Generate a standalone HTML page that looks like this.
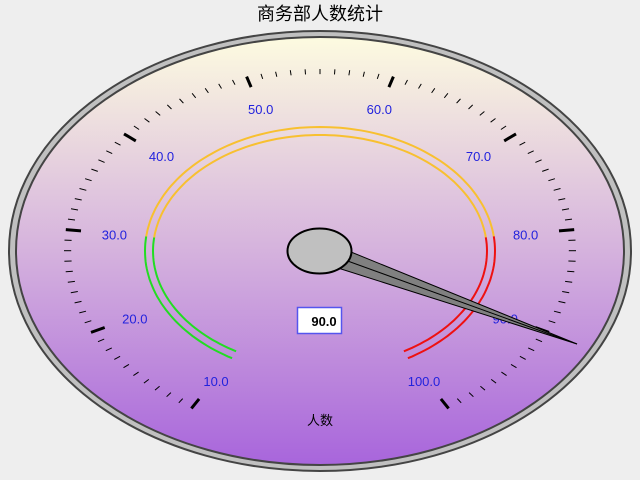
<!DOCTYPE html>
<html><head><meta charset="utf-8"><style>
html,body{margin:0;padding:0;background:#eeeeee;width:640px;height:480px;overflow:hidden}
svg{display:block}
</style></head><body>
<svg id="s" width="640" height="480" xmlns="http://www.w3.org/2000/svg" font-family="Liberation Sans, sans-serif">
<defs>
<linearGradient id="g" x1="0" y1="0" x2="0" y2="1">
<stop offset="0" stop-color="#fdfbe0"/>
<stop offset="0.5" stop-color="#d5b2dd"/>
<stop offset="1" stop-color="#a865dc"/>
</linearGradient>
</defs>
<text x="320" y="20" text-anchor="middle" font-size="18" font-family="Liberation Sans, Noto Sans CJK SC, sans-serif" fill="#000">商务部人数统计</text>
<ellipse cx="320" cy="251" rx="311" ry="220" fill="#c0c0c0" stroke="#444" stroke-width="2"/>
<ellipse cx="320" cy="251" rx="304" ry="214" fill="url(#g)" stroke="#444" stroke-width="2"/>
<g id="dyn"></g>
<text x="320" y="425" text-anchor="middle" font-size="13" font-family="Liberation Sans, Noto Sans CJK SC, sans-serif" fill="#000">人数</text>
<rect x="297.5" y="307.5" width="44" height="26" fill="#fff" stroke="#5555ee" stroke-width="1.5"/>
<text x="324" y="326" text-anchor="middle" font-size="13" font-weight="bold" fill="#000">90.0</text>
</svg>
<script>
var cx=320,cy=251,R=256,Q=182,g=document.getElementById("dyn"),h="";
function ang(v){return (90-(v-55)*3.33)*Math.PI/180;}
function pt(v,rx,ry){var a=ang(v);return [cx+rx*Math.cos(a),cy-ry*Math.sin(a)];}
function arc(v1,v2,rx,ry,col){var d="";for(var v=v1;v<=v2+1e-6;v+=0.5){var p=pt(v,rx,ry);d+=(d?"L":"M")+p[0].toFixed(1)+" "+p[1].toFixed(1);}h+='<path d="'+d+'" fill="none" stroke="'+col+'" stroke-width="2"/>';}
arc(10,30,175,124,"#22dd22");arc(10,30,167,116,"#22dd22");
arc(30,80,175,124,"#f8c030");arc(30,80,167,116,"#f8c030");
arc(80,100,175,124,"#ee1111");arc(80,100,167,116,"#ee1111");
for(var v=10;v<=100;v++){var maj=v%10==0;var f=maj?0.94:0.972;var a=pt(v,R,Q),b=pt(v,R*f,Q*f);
h+='<line x1="'+a[0].toFixed(1)+'" y1="'+a[1].toFixed(1)+'" x2="'+b[0].toFixed(1)+'" y2="'+b[1].toFixed(1)+'" stroke="#000" stroke-width="'+(maj?3:1)+'"/>';
if(maj){var l=pt(v,207,149);h+='<text x="'+l[0].toFixed(1)+'" y="'+(l[1]+6).toFixed(1)+'" text-anchor="middle" font-size="13" fill="#2222dd">'+v+'.0</text>';}}
h+='<polygon points="316,261 324,241 577,344" fill="#808080" stroke="#000" stroke-width="1"/>';
h+='<line x1="320" y1="251" x2="577" y2="344" stroke="#000" stroke-width="1"/>';
h+='<ellipse cx="319.5" cy="251" rx="32" ry="22.5" fill="#c0c0c0" stroke="#000" stroke-width="2"/>';
g.innerHTML=h;
</script>
</body></html>
